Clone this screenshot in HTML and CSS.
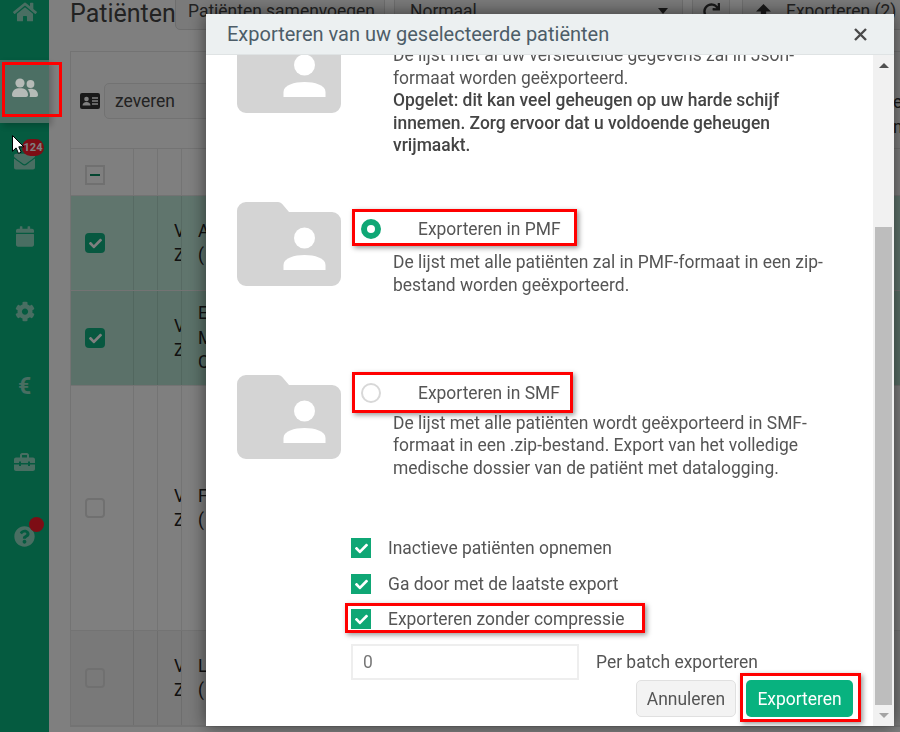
FILE: index.html
```html
<!DOCTYPE html>
<html lang="nl">
<head>
<meta charset="utf-8">
<title>Patiënten</title>
<link rel="stylesheet" href="styles.css">
</head>
<body>
<div class="app">
  <nav class="sidebar">
    <div class="nav-item"><svg class="ico" viewBox="0 0 576 512"><path d="M280.37 148.26L96 300.11V464a16 16 0 0 0 16 16l112.06-.29a16 16 0 0 0 15.92-16V368a16 16 0 0 1 16-16h64a16 16 0 0 1 16 16v95.64a16 16 0 0 0 16 16.05L464 480a16 16 0 0 0 16-16V300L295.67 148.26a12.19 12.19 0 0 0-15.3 0zM571.6 251.47L488 182.56V44.05a12 12 0 0 0-12-12h-56a12 12 0 0 0-12 12v72.61L318.47 43a48 48 0 0 0-61 0L4.34 251.47a12 12 0 0 0-1.6 16.9l25.5 31A12 12 0 0 0 45.15 301l235.22-193.74a12.19 12.19 0 0 1 15.3 0L530.9 301a12 12 0 0 0 16.9-1.6l25.5-31a12 12 0 0 0-1.7-16.93z"/></svg></div>
    <div class="nav-item active"><svg class="ico ico-users" viewBox="0 0 26 19"><circle cx="8" cy="5" r="4.6"/><circle cx="18.5" cy="6" r="3.9"/><path d="M0 17c0-5 3.500-6.800 8-6.800s8 1.800 8 6.800c0 1.200-.8 2-2 2H2c-1.200 0-2-.8-2-2z"/><path d="M17.500 19c.4-.7.500-1.300.5-2 0-2.300-.8-4.300-2.300-5.600.9-.5 1.800-.7 2.800-.7 4.300 0 7.500 2 7.500 6.300 0 1.200-.8 2-2 2z"/></svg></div>
    <div class="nav-item"><span class="badge">124</span><svg class="ico ico-env" viewBox="0 0 512 512"><path d="M502.3 190.8c3.900-3.100 9.700-.2 9.700 4.700V400c0 26.500-21.500 48-48 48H48c-26.500 0-48-21.500-48-48V195.600c0-5 5.700-7.800 9.700-4.700 22.400 17.400 52.100 39.500 154.100 113.600 21.100 15.400 56.700 47.800 92.200 47.600 35.700.3 72-32.800 92.300-47.600 102-74.100 131.600-96.300 154-113.700zM256 320c23.200.4 56.600-29.200 73.400-41.400 132.700-96.300 142.800-104.700 173.400-128.700 5.800-4.500 9.200-11.500 9.200-18.900v-19c0-26.500-21.500-48-48-48H48C21.500 64 0 85.500 0 112v19c0 7.400 3.400 14.300 9.200 18.900 30.600 23.900 40.700 32.400 173.400 128.700 16.800 12.200 50.200 41.800 73.400 41.400z"/></svg></div>
    <div class="nav-item"><svg class="ico ico-cal" viewBox="0 0 448 512"><path d="M12 192h424c6.600 0 12 5.400 12 12v260c0 26.500-21.500 48-48 48H48c-26.500 0-48-21.500-48-48V204c0-6.600 5.400-12 12-12zm436-44v-36c0-26.500-21.500-48-48-48h-48V12c0-6.600-5.400-12-12-12h-40c-6.600 0-12 5.400-12 12v52H160V12c0-6.600-5.400-12-12-12h-40c-6.600 0-12 5.400-12 12v52H48C21.500 64 0 85.500 0 112v36c0 6.600 5.400 12 12 12h424c6.600 0 12-5.400 12-12z"/></svg></div>
    <div class="nav-item"><svg class="ico ico-cog" viewBox="0 0 512 512"><path d="M487.4 315.700l-42.600-24.600c4.300-23.200 4.300-47 0-70.200l42.600-24.600c4.900-2.800 7.100-8.600 5.500-14-11.100-35.600-30-67.800-54.700-94.600-3.800-4.100-10-5.100-14.800-2.300L380.800 110c-17.900-15.400-38.500-27.300-60.800-35.100V25.800c0-5.600-3.900-10.500-9.400-11.700-36.700-8.200-74.300-7.800-109.200 0-5.500 1.200-9.400 6.100-9.400 11.700V75c-22.200 7.900-42.800 19.800-60.800 35.100L88.700 85.500c-4.900-2.800-11-1.900-14.800 2.300-24.700 26.700-43.600 58.900-54.700 94.600-1.700 5.400.6 11.200 5.500 14L67.300 221c-4.300 23.200-4.300 47 0 70.200l-42.600 24.600c-4.900 2.800-7.100 8.600-5.500 14 11.100 35.600 30 67.800 54.700 94.600 3.800 4.100 10 5.100 14.800 2.300l42.600-24.600c17.900 15.400 38.500 27.300 60.800 35.100v49.200c0 5.600 3.900 10.500 9.400 11.700 36.700 8.200 74.300 7.800 109.200 0 5.500-1.200 9.400-6.100 9.400-11.700v-49.200c22.200-7.900 42.800-19.800 60.800-35.100l42.600 24.600c4.900 2.800 11 1.900 14.800-2.300 24.700-26.700 43.600-58.900 54.700-94.600 1.500-5.500-.7-11.300-5.600-14.100zM256 336c-44.100 0-80-35.900-80-80s35.900-80 80-80 80 35.900 80 80-35.900 80-80 80z"/></svg></div>
    <div class="nav-item"><span class="euro">€</span></div>
    <div class="nav-item"><svg class="ico ico-tool" viewBox="0 0 21 18"><path d="M6 5V2.200C6 1 7 0 8.200 0h4.600C14 0 15 1 15 2.200V5h-2V2.400c0-.3-.2-.4-.4-.4H8.400c-.3 0-.4.1-.4.4V5z"/><path d="M2 4.500h17c1.100 0 2 .9 2 2V10h-5V8.500h-2V10H7V8.500H5V10H0V6.500c0-1.100.9-2 2-2z"/><path d="M0 11.500h5V13h2v-1.500h7V13h2v-1.500h5V16c0 1.100-.9 2-2 2H2c-1.100 0-2-.9-2-2z"/></svg></div>
    <div class="nav-item"><span class="dot"></span><svg class="ico ico-help" viewBox="0 0 512 512"><path d="M504 256c0 136.997-111.043 248-248 248S8 392.997 8 256C8 119.083 119.043 8 256 8s248 111.083 248 248zM262.655 90c-54.497 0-89.255 22.957-116.549 63.758-3.536 5.286-2.353 12.415 2.715 16.258l34.699 26.310c5.205 3.947 12.621 3.008 16.665-2.122 17.864-22.658 30.113-35.797 57.303-35.797 20.429 0 45.698 13.148 45.698 32.958 0 14.976-12.363 22.667-32.534 33.976C247.128 238.528 216 254.941 216 296v4c0 6.627 5.373 12 12 12h56c6.627 0 12-5.373 12-12v-1.333c0-28.462 83.186-29.647 83.186-106.667 0-58.002-60.165-102-116.531-102zM256 338c-25.365 0-46 20.635-46 46 0 25.364 20.635 46 46 46s46-20.636 46-46c0-25.365-20.635-46-46-46z"/></svg></div>
  </nav>

  <main class="main">
    <div class="toolbar">
      <h1 class="page-title">Patiënten</h1>
      <div class="tool-btn tool-merge">Patiënten samenvoegen</div>
      <div class="tool-btn tool-select"><span>Normaal</span><span class="caret"></span></div>
      <div class="tool-btn tool-refresh"><svg class="tool-ico" viewBox="0 0 512 512"><path d="M500.33 0h-47.41a12 12 0 0 0-12 12.570l4 82.760A247.420 247.420 0 0 0 256 8C119.340 8 7.900 119.530 8 256.190 8.100 393.070 119.100 504 256 504a247.100 247.100 0 0 0 166.180-63.910 12 12 0 0 0 .48-17.430l-34-34a12 12 0 0 0-16.380-.55A176 176 0 1 1 402.100 157.800l-101.530-4.870a12 12 0 0 0-12.570 12v47.410a12 12 0 0 0 12 12h200.330a12 12 0 0 0 12-12V12a12 12 0 0 0-12-12z"/></svg></div>
      <div class="tool-btn tool-export"><svg class="tool-ico" viewBox="0 0 16 16"><path d="M8 1l7 7h-4.500v7h-5V8H1z"/></svg><span>Exporteren (2)</span></div>
    </div>

    <section class="card">
      <div class="search-row">
        <svg class="id-ico" viewBox="0 0 20 16"><rect width="20" height="16" rx="2"/><circle cx="6.500" cy="6" r="2.300" fill="#fff"/><path d="M2.500 12.500c0-2.300 1.800-3.500 4-3.500s4 1.200 4 3.500z" fill="#fff"/><path d="M12 5h6M12 8h6M12 11h6" stroke="#fff" stroke-width="1.400"/></svg>
        <div class="search-input">zeveren</div>
        <div class="edge-text edge-search">e<br>n</div>
      </div>
      <div class="row row-head">
        <div class="cell cell-check"><span class="check check-mixed"></span></div>
        <div class="cell cell-narrow"></div>
        <div class="cell cell-narrow"></div>
        <div class="cell cell-wide"><span class="edge-text">t</span></div>
      </div>
      <div class="row row-a row-sel">
        <div class="cell cell-check"><span class="check check-on"><svg viewBox="0 0 512 512"><path d="M173.898 439.404l-166.400-166.400c-9.997-9.997-9.997-26.206 0-36.204l36.203-36.204c9.997-9.998 26.207-9.998 36.204 0L192 312.690 432.095 72.596c9.997-9.997 26.207-9.997 36.204 0l36.203 36.204c9.997 9.997 9.997 26.206 0 36.204l-294.400 294.401c-9.998 9.997-26.207 9.997-36.204-.001z"/></svg></span></div>
        <div class="cell cell-narrow"></div>
        <div class="cell cell-narrow cell-text">V<br>Z</div>
        <div class="cell cell-wide cell-text">A<br>(</div>
      </div>
      <div class="row row-a row-sel row-sel-alt">
        <div class="cell cell-check"><span class="check check-on"><svg viewBox="0 0 512 512"><path d="M173.898 439.404l-166.400-166.400c-9.997-9.997-9.997-26.206 0-36.204l36.203-36.204c9.997-9.998 26.207-9.998 36.204 0L192 312.690 432.095 72.596c9.997-9.997 26.207-9.997 36.204 0l36.203 36.204c9.997 9.997 9.997 26.206 0 36.204l-294.400 294.401c-9.998 9.997-26.207 9.997-36.204-.001z"/></svg></span></div>
        <div class="cell cell-narrow"></div>
        <div class="cell cell-narrow cell-text">V<br>Z</div>
        <div class="cell cell-wide cell-text">E<br>M<br>C</div>
      </div>
      <div class="row row-b">
        <div class="cell cell-check"><span class="check"></span></div>
        <div class="cell cell-narrow"></div>
        <div class="cell cell-narrow cell-text">V<br>Z</div>
        <div class="cell cell-wide cell-text">F<br>(</div>
      </div>
      <div class="row row-a row-dim">
        <div class="cell cell-check"><span class="check"></span></div>
        <div class="cell cell-narrow"></div>
        <div class="cell cell-narrow cell-text">V<br>Z</div>
        <div class="cell cell-wide cell-text">L<br>(</div>
      </div>
    </section>
  </main>
</div>

<div class="backdrop">
  <div class="modal">
    <header class="modal-head">
      <h2 class="modal-title">Exporteren van uw geselecteerde patiënten</h2>
      <svg class="close-ico" viewBox="0 0 13 13"><path d="M1 1l11 11M12 1L1 12"/></svg>
    </header>
    <div class="modal-body">
      <div class="modal-scroll">
        <div class="option">
          <svg class="folder" viewBox="0 0 104 84"><path d="M9 0h32a6 6 0 0 1 4 1.700L52 10h43a9 9 0 0 1 9 9v56a9 9 0 0 1-9 9H9a9 9 0 0 1-9-9V9a9 9 0 0 1 9-9z"/><circle cx="67.500" cy="36" r="10.500" fill="#fff"/><path d="M46.500 68v-5c0-7 11-10 21-10s21 3 21 10v5z" fill="#fff"/></svg>
          <div class="option-text">
            <div class="option-label"><span class="radio"></span><span>Exporteren in Json</span></div>
            <p class="option-desc">De lijst met al uw versleutelde gegevens zal in Json-formaat worden geëxporteerd.<br><strong>Opgelet: dit kan veel geheugen op uw harde schijf innemen. Zorg ervoor dat u voldoende geheugen vrijmaakt.</strong></p>
          </div>
        </div>
        <div class="option">
          <svg class="folder" viewBox="0 0 104 84"><path d="M9 0h32a6 6 0 0 1 4 1.700L52 10h43a9 9 0 0 1 9 9v56a9 9 0 0 1-9 9H9a9 9 0 0 1-9-9V9a9 9 0 0 1 9-9z"/><circle cx="67.500" cy="36" r="10.500" fill="#fff"/><path d="M46.500 68v-5c0-7 11-10 21-10s21 3 21 10v5z" fill="#fff"/></svg>
          <div class="option-text">
            <div class="option-label"><span class="radio radio-on"></span><span>Exporteren in PMF</span></div>
            <p class="option-desc">De lijst met alle patiënten zal in PMF-formaat in een zip-bestand worden geëxporteerd.</p>
          </div>
        </div>
        <div class="option">
          <svg class="folder" viewBox="0 0 104 84"><path d="M9 0h32a6 6 0 0 1 4 1.700L52 10h43a9 9 0 0 1 9 9v56a9 9 0 0 1-9 9H9a9 9 0 0 1-9-9V9a9 9 0 0 1 9-9z"/><circle cx="67.500" cy="36" r="10.500" fill="#fff"/><path d="M46.500 68v-5c0-7 11-10 21-10s21 3 21 10v5z" fill="#fff"/></svg>
          <div class="option-text option-text-tight">
            <div class="option-label"><span class="radio"></span><span>Exporteren in SMF</span></div>
            <p class="option-desc">De lijst met alle patiënten wordt geëxporteerd in SMF-formaat in een .zip-bestand. Export van het volledige medische dossier van de patiënt met datalogging.</p>
          </div>
        </div>
        <div class="settings">
          <div class="setting"><span class="tick"><svg viewBox="0 0 512 512"><path d="M173.898 439.404l-166.400-166.400c-9.997-9.997-9.997-26.206 0-36.204l36.203-36.204c9.997-9.998 26.207-9.998 36.204 0L192 312.690 432.095 72.596c9.997-9.997 26.207-9.997 36.204 0l36.203 36.204c9.997 9.997 9.997 26.206 0 36.204l-294.400 294.401c-9.998 9.997-26.207 9.997-36.204-.001z"/></svg></span><span>Inactieve patiënten opnemen</span></div>
          <div class="setting"><span class="tick"><svg viewBox="0 0 512 512"><path d="M173.898 439.404l-166.400-166.400c-9.997-9.997-9.997-26.206 0-36.204l36.203-36.204c9.997-9.998 26.207-9.998 36.204 0L192 312.690 432.095 72.596c9.997-9.997 26.207-9.997 36.204 0l36.203 36.204c9.997 9.997 9.997 26.206 0 36.204l-294.400 294.401c-9.998 9.997-26.207 9.997-36.204-.001z"/></svg></span><span>Ga door met de laatste export</span></div>
          <div class="setting"><span class="tick"><svg viewBox="0 0 512 512"><path d="M173.898 439.404l-166.400-166.400c-9.997-9.997-9.997-26.206 0-36.204l36.203-36.204c9.997-9.998 26.207-9.998 36.204 0L192 312.690 432.095 72.596c9.997-9.997 26.207-9.997 36.204 0l36.203 36.204c9.997 9.997 9.997 26.206 0 36.204l-294.400 294.401c-9.998 9.997-26.207 9.997-36.204-.001z"/></svg></span><span>Exporteren zonder compressie</span></div>
          <div class="batch"><div class="batch-input">0</div><span>Per batch exporteren</span></div>
        </div>
        <div class="actions">
          <div class="btn btn-cancel">Annuleren</div>
          <div class="btn btn-primary">Exporteren</div>
        </div>
      </div>
      <div class="scrollbar">
        <div class="arrow-box"><span class="arrow-up"></span></div>
        <div class="thumb"></div>
        <div class="arrow-box"><span class="arrow-down"></span></div>
      </div>
    </div>
  </div>
</div>

<div class="mark mark-nav"></div>
<div class="mark mark-pmf"></div>
<div class="mark mark-smf"></div>
<div class="mark mark-comp"></div>
<div class="mark mark-export"></div>
<svg class="cursor" viewBox="0 0 12 19"><path d="M.5.500v15.800l3.600-3.400 2.400 5.500 2.700-1.200-2.400-5.400h5z" fill="#fff" stroke="#000" stroke-width="1"/></svg>
</body>
</html>
```

FILE: styles.css
```css
* { box-sizing: border-box; }
html, body { margin: 0; height: 100%; overflow: hidden; background: #fff; }
body { font-family: Roboto, "Liberation Sans", sans-serif; font-size: 17.45px; color: #333; }

.app { display: flex; width: 900px; height: 732px; overflow: hidden; background: #fff; }

/* sidebar */
.sidebar { width: 49px; flex: none; background: #0ab680; display: flex; flex-direction: column; height: 732px; }
.nav-item { position: relative; flex: none; height: 63px; margin-bottom: 12px; padding-top: 15px; display: flex; justify-content: center; align-items: flex-start; }
.nav-item:first-child { margin-top: -15px; }
.nav-item.active { background: #99dfc9; box-shadow: 3px 3px 6px rgba(0,0,0,.2); }
.ico { width: 24px; height: 24px; fill: #92dcc4; display: block; }
.ico-users { position: relative; z-index: 6; width: 26px; height: 19px; fill: #b5bbb7; margin-top: 3px; }
.ico-env { width: 21px; height: 21px; margin-top: 1px; }
.ico-cal { width: 18px; height: 21px; margin-top: 1px; }
.ico-cog { width: 20px; height: 21px; margin-top: 1px; }
.ico-tool { width: 21px; height: 18px; margin-top: 3px; }
.ico-help { width: 21px; height: 21px; margin-top: 1px; }
.euro { color: #92dcc4; font-size: 23px; font-weight: 700; line-height: 24px; }
.badge { position: absolute; left: 22px; top: 4px; width: 22px; height: 17px; border-radius: 9px; background: #fa1a2a; color: #fff; font-size: 11px; font-weight: 700; line-height: 17px; text-align: center; }
.dot { position: absolute; left: 29px; top: 7px; width: 15px; height: 15px; border-radius: 50%; background: #fa1a2a; }

/* main */
.main { flex: 1; min-width: 0; padding-left: 21px; }
.toolbar { display: flex; align-items: flex-start; height: 38px; margin-top: -8px; margin-bottom: 21px; width: 860px; }
.page-title { margin: 9px 0 0; width: 105px; flex: none; font-size: 25px; font-weight: 400; line-height: 26px; color: #444; white-space: nowrap; }
.tool-btn { flex: none; height: 38px; border: 1px solid #dcdcdc; border-radius: 5px; background: #f4f4f4; display: flex; align-items: center; color: #444; line-height: 38px; white-space: nowrap; }
.tool-merge { width: 210px; padding-left: 12px; margin-right: 9px; }
.tool-select { width: 289px; padding: 0 14px 0 15px; justify-content: space-between; margin-right: 9px; }
.caret { width: 0; height: 0; border-left: 5px solid transparent; border-right: 5px solid transparent; border-top: 6px solid #333; }
.tool-refresh { width: 38px; justify-content: center; margin-right: 12px; }
.tool-export { width: 170px; padding-left: 12px; gap: 14px; }
.tool-ico { width: 17px; height: 17px; fill: #333; display: block; }

.card { width: 860px; border: 1px solid #e6e6e6; }
.search-row { height: 97px; display: flex; align-items: center; padding: 2px 0 0 9px; border-bottom: 1px solid #e6e6e6; }
.id-ico { width: 20px; height: 16px; fill: #333; flex: none; margin-right: 4px; }
.search-input { width: 400px; height: 36px; border: 1px solid #e4e4e4; border-radius: 5px; background: #fafafa; padding-left: 10px; line-height: 34px; color: #444; }
.edge-text { margin-left: 389px; line-height: 24.5px; color: #333; }
.edge-search { margin-top: 27px; }

.row { display: flex; border-bottom: 1px solid #e6e6e6; }
.row-head { height: 47px; }
.row-a { height: 95px; }
.row-b { height: 245px; background: #fff; }
.row-sel { background: #c1eadb; }
.row-sel-alt { background: #b6e3d2; }
.row-dim { background: #f3f3f3; }
.cell { border-right: 1px solid rgba(0,0,0,.09); flex: none; }
.cell-check { width: 63px; display: flex; align-items: center; padding-left: 14px; }
.row-head .cell-check { padding-top: 5px; }
.cell-narrow { width: 24px; }
.cell-wide { flex: 1; border-right: 0; }
.cell-text { padding-left: 16px; overflow: hidden; white-space: nowrap; display: flex; flex-direction: column; justify-content: center; line-height: 24.5px; color: #222; }
.row-head .cell-wide { display: flex; justify-content: flex-end; align-items: center; }
.row-head .edge-text { margin: 0 3px 0 0; }

.check { width: 20px; height: 20px; border: 2px solid #e0e0e0; border-radius: 4px; display: flex; align-items: center; justify-content: center; }
.check svg { width: 13px; height: 13px; fill: #fff; display: block; }
.check-on { border: 0; background: #0fb080; }
.check-mixed { border-radius: 0; }
.check-mixed::before { content: ""; width: 10px; height: 2px; background: #0a8c62; }

/* modal */
.backdrop { position: fixed; inset: 0; z-index: 5; background: rgba(0,0,0,.5); padding: 14px 6px 6px 206px; }
.modal { width: 688px; height: 712px; background: #fff; display: flex; flex-direction: column; box-shadow: 0 0 16px rgba(0,0,0,.55); }
.modal-head { height: 41px; flex: none; background: #ecf0f1; border-bottom: 1px solid #dfe3e4; display: flex; align-items: center; justify-content: space-between; padding: 0 27px 0 21px; }
.modal-title { margin: 0; font-size: 20px; font-weight: 400; color: #4d5d68; line-height: 40px; white-space: nowrap; }
.close-ico { width: 13px; height: 13px; fill: none; stroke: #4a4a4a; stroke-width: 2.4; display: block; }
.modal-body { flex: 1; min-height: 0; display: flex; }
.modal-scroll { flex: 1; min-width: 0; overflow: hidden; color: #555; }
.option { height: 173px; display: flex; align-items: center; padding-left: 31px; }
.option:first-child { margin-top: -70px; }
.folder { width: 104px; height: 84px; flex: none; fill: #d4d4d4; display: block; margin-right: 52px; align-self: flex-start; margin-top: 44px; }
.option-text { width: 452px; margin-top: 24px; }
.option-label { height: 24px; display: flex; align-items: center; margin-left: -32px; line-height: 24px; gap: 37px; margin-bottom: 10px; }
.option-text-tight .option-label { position: relative; top: 1px; margin-bottom: 8px; }
.radio { width: 20px; height: 20px; flex: none; border: 2px solid #d8d8d8; border-radius: 50%; }
.radio-on { border: 6px solid #0fa775; }
.option-desc { margin: 0; line-height: 22.4px; }
.option-desc strong { font-weight: 500; color: #444; }

.settings { padding-left: 145px; margin-top: 34px; }
.setting { height: 20px; margin-bottom: 16px; display: flex; align-items: center; gap: 17px; line-height: 20px; }
.setting:nth-child(2) { margin-bottom: 15px; }
.tick { width: 20px; height: 20px; flex: none; background: #0fa775; display: flex; align-items: center; justify-content: center; }
.tick svg { width: 13px; height: 13px; fill: #fff; display: block; }
.batch { display: flex; align-items: center; gap: 17px; margin-top: -1px; }
.batch-input { width: 228px; height: 36px; border: 2px solid #eeeeee; padding-left: 10px; line-height: 32px; color: #777; }
.actions { display: flex; justify-content: flex-end; gap: 10px; padding-right: 20px; }
.btn { height: 37px; line-height: 36px; border-radius: 5px; text-align: center; border: 1px solid transparent; }
.btn-cancel { width: 100px; background: #f3f3f3; border-color: #e0e0e0; color: #555; }
.btn-primary { width: 107px; background: #08b27f; color: #fff; }

.scrollbar { width: 21px; flex: none; background: #f1f1f1; display: flex; flex-direction: column; align-items: center; }
.arrow-box { height: 21px; width: 21px; display: flex; align-items: center; justify-content: center; }
.arrow-up { width: 0; height: 0; border-left: 5px solid transparent; border-right: 5px solid transparent; border-bottom: 5px solid #505050; }
.arrow-down { width: 0; height: 0; border-left: 5px solid transparent; border-right: 5px solid transparent; border-top: 5px solid #a3a3a3; }
.thumb { width: 17px; height: 478px; margin-top: auto; background: #bdbdbd; }

/* annotations drawn over the screenshot */
.mark { position: fixed; z-index: 6; border: 3px solid #f00; box-shadow: 2px 2px 5px rgba(0,0,0,.4); }
.mark-nav { left: 2px; top: 62px; width: 60px; height: 55px; box-shadow: none; }
.mark-pmf { left: 352px; top: 209px; width: 225px; height: 37px; }
.mark-smf { left: 352px; top: 372px; width: 221px; height: 41px; }
.mark-comp { left: 345px; top: 603px; width: 300px; height: 30px; }
.mark-export { left: 740px; top: 673px; width: 121px; height: 49px; }
.cursor { position: fixed; z-index: 6; left: 12px; top: 135px; width: 12px; height: 19px; }
```
